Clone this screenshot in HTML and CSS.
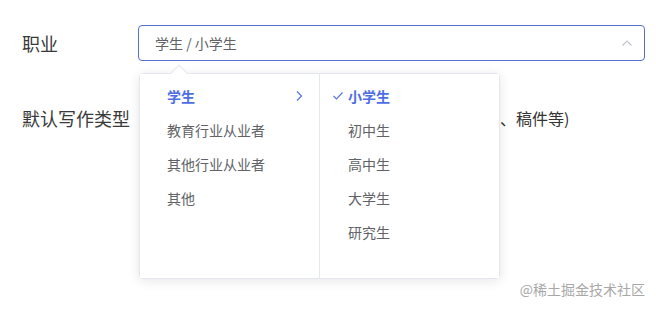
FILE: index.html
```html
<!DOCTYPE html>
<html lang="zh-CN">
<head>
<meta charset="utf-8">
<link rel="stylesheet" href="styles.css">
</head>
<body>
<div class="form">
  <div class="row">
    <label class="label">职业</label>
    <div class="select">
      <span class="value">学生 / 小学生</span>
      <svg class="caret" width="12" height="8" viewBox="0 0 12 8"><path d="M1.5 6.5 L6 2 L10.5 6.5" fill="none" stroke="#c0c4cc" stroke-width="1.2"/></svg>
      <div class="dropdown">
        <span class="arrow"></span>
        <ul class="col">
          <li class="item active"><span>学生</span>
            <svg class="chev" width="8" height="12" viewBox="0 0 8 12"><path d="M2 1.5 L6.5 6 L2 10.5" fill="none" stroke="#5b78e0" stroke-width="1.3"/></svg>
          </li>
          <li class="item"><span>教育行业从业者</span></li>
          <li class="item"><span>其他行业从业者</span></li>
          <li class="item"><span>其他</span></li>
        </ul>
        <ul class="col col2">
          <li class="item active">
            <svg class="check" width="12" height="10" viewBox="0 0 12 10"><path d="M1.5 5 L4.5 8 L10.5 1.5" fill="none" stroke="#5b78e0" stroke-width="1.2"/></svg>
            <span>小学生</span></li>
          <li class="item"><span>初中生</span></li>
          <li class="item"><span>高中生</span></li>
          <li class="item"><span>大学生</span></li>
          <li class="item"><span>研究生</span></li>
        </ul>
      </div>
    </div>
  </div>
  <div class="row">
    <label class="label">默认写作类型</label>
    <div class="hint">、稿件等)</div>
  </div>
</div>
<div class="watermark">@稀土掘金技术社区</div>
</body>
</html>
```
FILE: styles.css
```css
* { box-sizing: border-box; }
html, body { margin: 0; padding: 0; }
body {
  width: 656px;
  height: 309px;
  background: #fff;
  font-family: "Noto Sans CJK SC", "Noto Sans", sans-serif;
  position: relative;
  overflow: hidden;
}
.form {
  padding: 25px 11px 0 22px;
  display: flex;
  flex-direction: column;
  gap: 39px;
}
.row {
  display: flex;
  align-items: center;
  height: 36px;
}
.label {
  width: 116px;
  flex: none;
  font-size: 18px;
  color: #3a3a3a;
  line-height: 36px;
}
.select {
  position: relative;
  flex: 1;
  height: 36px;
  border: 1px solid #5470d0;
  border-radius: 4px;
  display: flex;
  align-items: center;
  padding-left: 16px;
}
.value {
  font-size: 14px;
  color: #606266;
  flex: 1;
}
.caret { margin-right: 11px; }
.dropdown {
  position: absolute;
  top: 47px;
  left: 0;
  width: 361px;
  height: 206px;
  background: #fff;
  border: 1px solid #e4e7ed;
  border-radius: 4px;
  box-shadow: 0 2px 12px rgba(0,0,0,0.1);
  display: flex;
  z-index: 2;
}
.arrow {
  position: absolute;
  top: -7px;
  left: 33px;
  width: 12px;
  height: 12px;
  background: #fff;
  border-left: 1px solid #e4e7ed;
  border-top: 1px solid #e4e7ed;
  transform: rotate(45deg);
}
.col {
  list-style: none;
  margin: 0;
  padding: 5px 0;
  width: 179px;
  height: 100%;
  position: relative;
  background: #fff;
}
.col2 {
  border-left: 1px solid #e4e7ed;
  width: 180px;
}
.item {
  height: 34px;
  display: flex;
  align-items: center;
  padding-left: 27px;
  padding-right: 16px;
  font-size: 14px;
  color: #606266;
  position: relative;
}
.item span { flex: 1; }
.col2 .item { padding-left: 28px; }
.item.active { color: #4d6ee3; font-weight: bold; }
.check { position: absolute; left: 12px; top: 12px; }
.hint {
  margin-left: 362px;
  font-size: 16px;
  color: #333;
  white-space: nowrap;
}
.watermark {
  position: absolute;
  right: 11px;
  bottom: 10px;
  font-size: 14px;
  color: #a8a8a8;
}
```
